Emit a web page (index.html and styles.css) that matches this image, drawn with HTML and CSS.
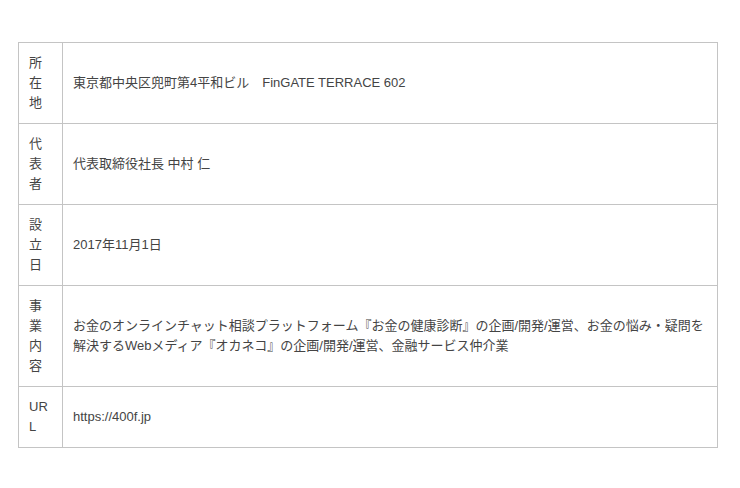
FILE: index.html
```html
<!DOCTYPE html>
<html lang="ja">
<head>
<meta charset="utf-8">
<title>会社概要</title>
<link rel="stylesheet" href="styles.css">
</head>
<body>
<table class="info">
  <tr><th class="label">所在地</th><td class="value">東京都中央区兜町第4平和ビル　FinGATE TERRACE 602</td></tr>
  <tr><th class="label">代表者</th><td class="value">代表取締役社長 中村 仁</td></tr>
  <tr><th class="label">設立日</th><td class="value">2017年11月1日</td></tr>
  <tr><th class="label">事業内容</th><td class="value">お金のオンラインチャット相談プラットフォーム『お金の健康診断』の企画/開発/運営、お金の悩み・疑問を解決するWebメディア『オカネコ』の企画/開発/運営、金融サービス仲介業</td></tr>
  <tr><th class="label">URL</th><td class="value">https://400f.jp</td></tr>
</table>
</body>
</html>
```
FILE: styles.css
```css
html, body {
  margin: 0;
  background: #fff;
}
body {
  padding: 42px 0 0 18px;
  font-family: "Liberation Sans", "Noto Sans CJK JP", sans-serif;
  font-size: 13px;
  line-height: 20px;
  color: #444;
}
.info {
  border-collapse: collapse;
  table-layout: fixed;
  width: 700px;
}
.label, .value {
  border: 1px solid #c4c4c4;
  padding: 10px;
  vertical-align: middle;
  text-align: left;
  font-weight: normal;
  word-break: break-all;
}
.label {
  width: 23px;
}
```
